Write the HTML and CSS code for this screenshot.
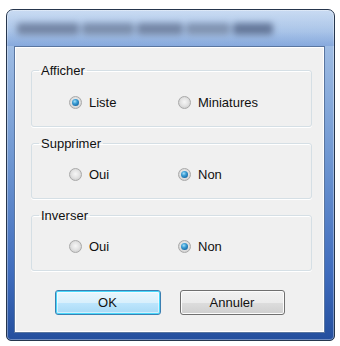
FILE: index.html
```html
<!DOCTYPE html>
<html lang="fr">
<head>
<meta charset="utf-8">
<title>Options</title>
<link rel="stylesheet" href="styles.css">
</head>
<body>
<div class="window">
  <div class="titlebar">
    <div class="title-blur" aria-hidden="true">
      <span class="tb w1"></span><span class="tb w2"></span><span class="tb w3"></span><span class="tb w4"></span><span class="tb w5"></span>
    </div>
  </div>
  <div class="client">
    <fieldset class="group">
      <legend>Afficher</legend>
      <div class="row">
        <label class="opt"><span class="radio on"></span>Liste</label>
        <label class="opt"><span class="radio"></span>Miniatures</label>
      </div>
    </fieldset>
    <fieldset class="group">
      <legend>Supprimer</legend>
      <div class="row">
        <label class="opt"><span class="radio"></span>Oui</label>
        <label class="opt"><span class="radio on"></span>Non</label>
      </div>
    </fieldset>
    <fieldset class="group">
      <legend>Inverser</legend>
      <div class="row">
        <label class="opt"><span class="radio"></span>Oui</label>
        <label class="opt"><span class="radio on"></span>Non</label>
      </div>
    </fieldset>
    <div class="buttons">
      <button class="btn default">OK</button>
      <button class="btn">Annuler</button>
    </div>
  </div>
</div>
</body>
</html>
```
FILE: styles.css
```css
html, body {
  margin: 0;
  padding: 0;
  background: #ffffff;
}
body {
  font-family: "Liberation Sans", Arial, sans-serif;
  font-size: 13px;
  color: #111;
}
.window {
  margin: 9px 0 0 6px;
  width: 329px;
  height: 332px;
  box-sizing: border-box;
  border: 1px solid #26364d;
  border-radius: 7px 7px 5px 5px;
  background: linear-gradient(to bottom, #b7cfee 0%, #9dbbe3 12%, #6f97d2 45%, #3f6cbd 80%, #244f9e 100%);
  padding: 0 9px 7px 7px;
  display: flex;
  flex-direction: column;
  box-shadow: inset 0 0 0 1px rgba(255,255,255,0.35);
}
.titlebar {
  height: 36px;
  flex: none;
  display: flex;
  align-items: center;
  background: linear-gradient(to bottom, rgba(255,255,255,0.25), rgba(255,255,255,0) 60%, rgba(60,110,200,0.25));
  margin: 0 -9px 0 -7px;
  padding: 0 0 0 10px;
  border-radius: 6px 6px 0 0;
}
.title-blur {
  display: flex;
  gap: 3px;
  height: 12px;
  filter: blur(3px);
  margin-top: 2px;
}
.tb {
  display: block;
  height: 12px;
  background: #7587a6;
  border-radius: 3px;
}
.w1 { width: 62px; }
.w2 { width: 52px; background: #7c8fad; }
.w3 { width: 46px; }
.w4 { width: 44px; background: #8194b2; }
.w5 { width: 40px; background: #66799b; }
.client {
  flex: 1;
  background: #f0f0f0;
  border: 1px solid #5a76a0;
  box-shadow: inset 0 0 0 1px #ffffff;
  padding: 16px 12px 0 16px;
  display: flex;
  flex-direction: column;
}
.group {
  margin: 0 0 9px 0;
  padding: 0 0 16px 0;
  border: 1px solid #d5dfe5;
  border-radius: 3px;
  box-shadow: 0 1px 0 #ffffff, inset 0 1px 0 #ffffff;
}
.group legend {
  margin-left: 7px;
  padding: 0 2px;
  line-height: 15px;
}
.row {
  display: flex;
  padding: 17px 0 0 37px;
  line-height: 15px;
}
.group + .group .row {
  padding-top: 16px;
}
.opt {
  display: flex;
  align-items: center;
  width: 109px;
  gap: 7px;
}
.radio {
  width: 13px;
  height: 13px;
  box-sizing: border-box;
  border-radius: 50%;
  border: 1px solid #a9a9a9;
  background: radial-gradient(circle at 50% 45%, #f6f6f6 0%, #e4e4e4 45%, #cfcfcf 80%, #dcdcdc 100%);
  display: flex;
  align-items: center;
  justify-content: center;
  flex: none;
}
.radio.on::after {
  content: "";
  width: 7px;
  height: 7px;
  border-radius: 50%;
  background: radial-gradient(circle at 40% 35%, #a9e0f8 0%, #3ea0d6 35%, #176aa6 75%, #0f4d86 100%);
}
.buttons {
  display: flex;
  justify-content: center;
  gap: 19px;
  margin-top: 10px;
  padding-right: 4px;
}
.btn {
  font-family: "Liberation Sans", Arial, sans-serif;
  font-size: 13px;
  color: #111;
  height: 25px;
  width: 105px;
  border: 1px solid #707070;
  border-radius: 3px;
  background: linear-gradient(to bottom, #f2f2f2 0%, #ebebeb 50%, #dddddd 51%, #cfcfcf 100%);
  box-shadow: inset 0 0 0 1px #fcfcfc;
  padding: 0;
}
.btn.default {
  width: 106px;
  border-color: #3c7fb1;
  background: linear-gradient(to bottom, #eaf6fd 0%, #d9f0fc 50%, #bee6fd 51%, #a7d9f5 100%);
  box-shadow: inset 0 0 0 1px #48d8fb, inset 0 0 0 2px rgba(255,255,255,0.5);
}
```
